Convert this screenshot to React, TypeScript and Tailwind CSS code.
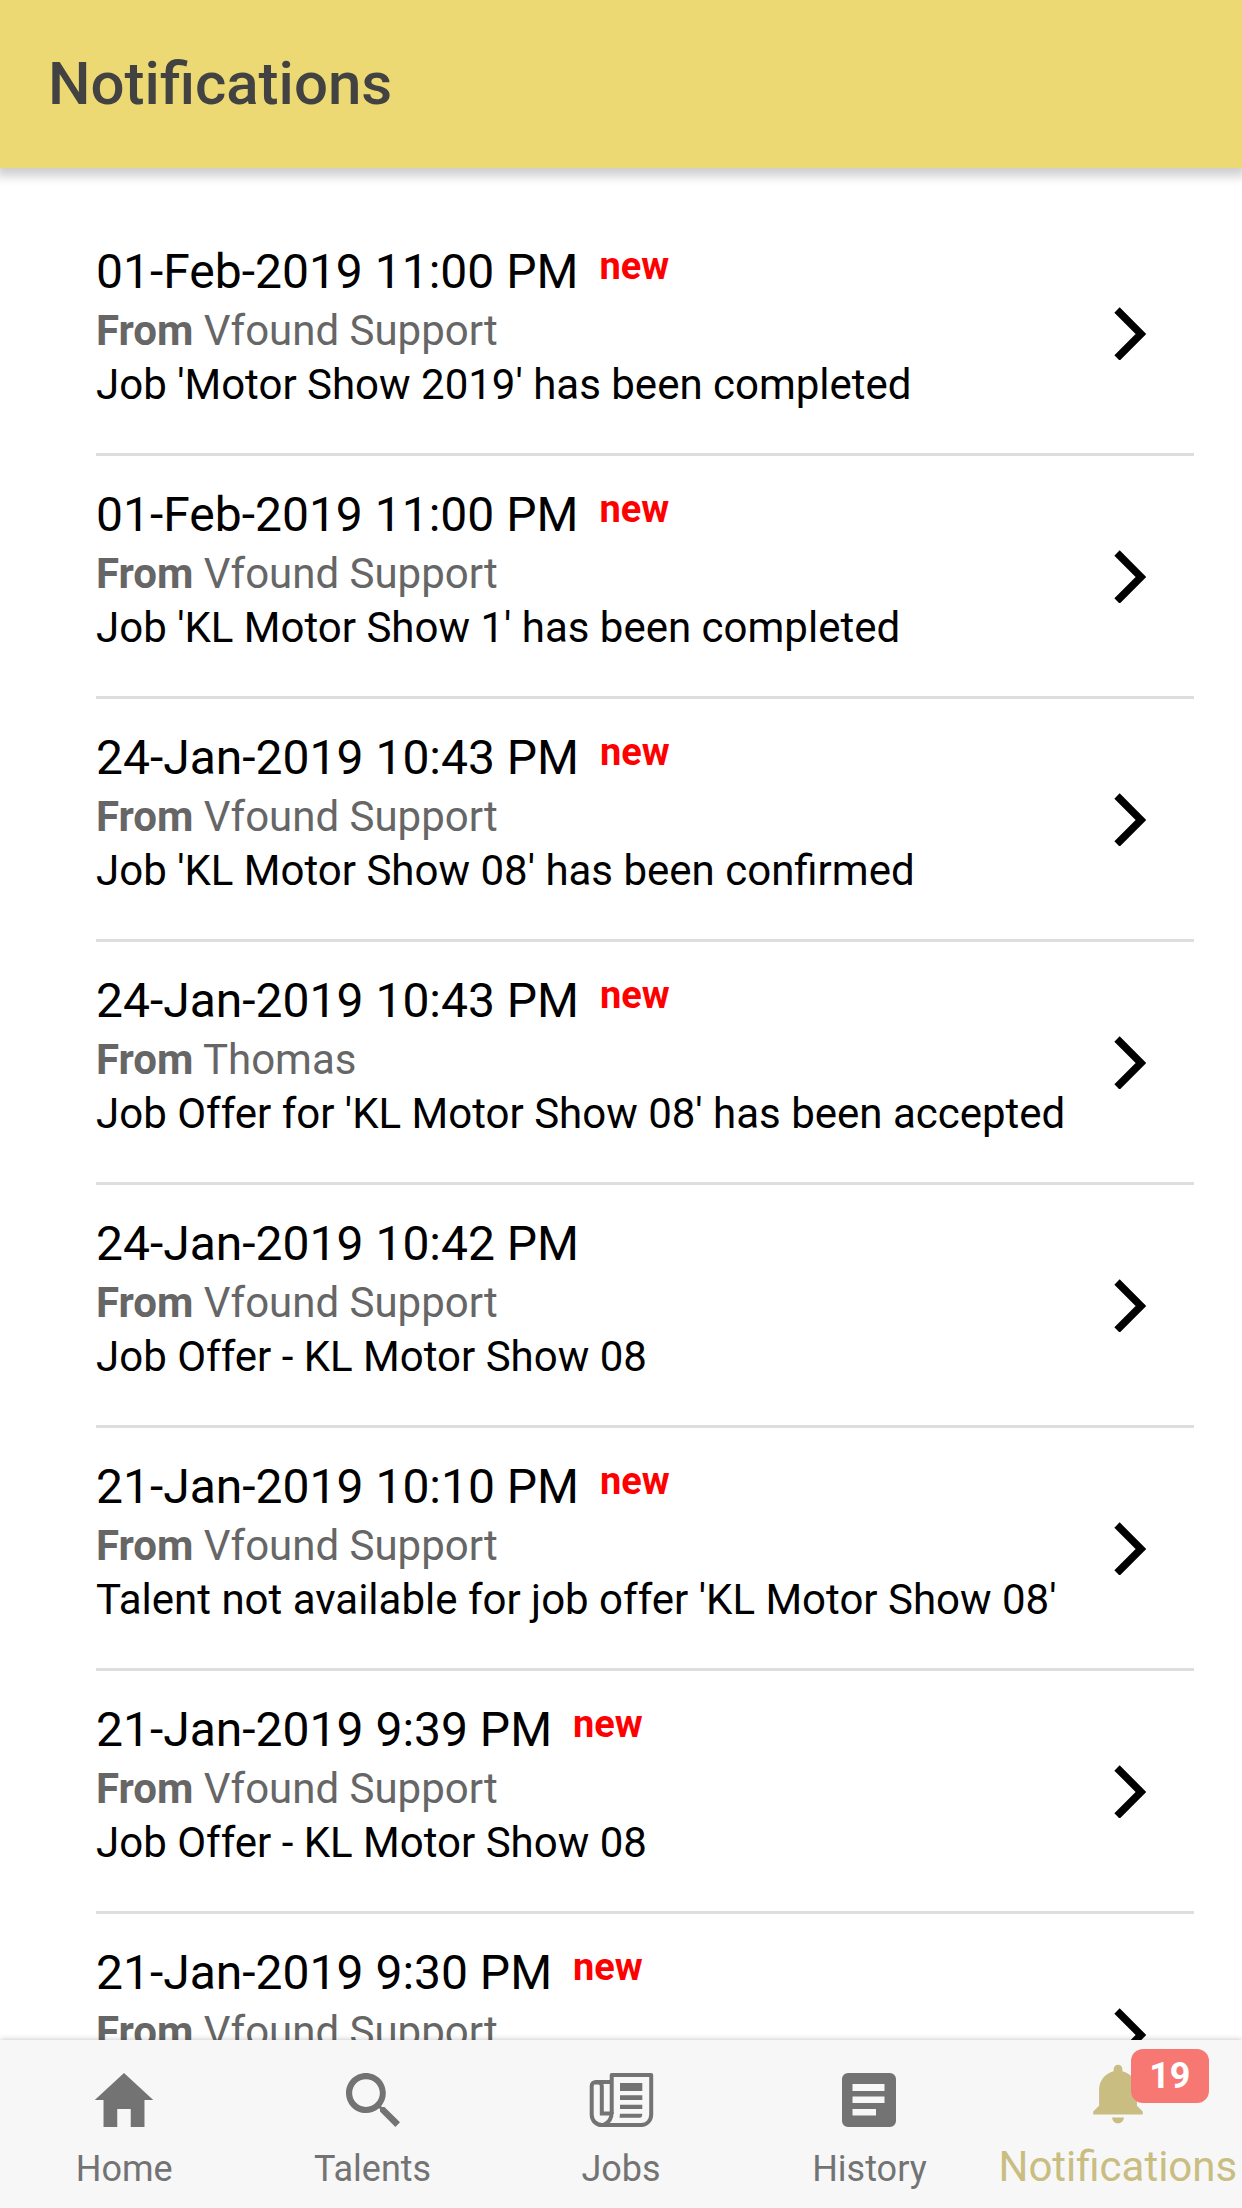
import type { ReactNode } from "react";
import { IoMdHome, IoMdNotifications, IoMdSearch } from "react-icons/io";

type Notification = {
  date: string;
  from: string;
  message: string;
  isNew: boolean;
};

const notifications: Notification[] = [
  { date: "01-Feb-2019 11:00 PM", from: "Vfound Support", message: "Job 'Motor Show 2019' has been completed", isNew: true },
  { date: "01-Feb-2019 11:00 PM", from: "Vfound Support", message: "Job 'KL Motor Show 1' has been completed", isNew: true },
  { date: "24-Jan-2019 10:43 PM", from: "Vfound Support", message: "Job 'KL Motor Show 08' has been confirmed", isNew: true },
  { date: "24-Jan-2019 10:43 PM", from: "Thomas", message: "Job Offer for 'KL Motor Show 08' has been accepted", isNew: true },
  { date: "24-Jan-2019 10:42 PM", from: "Vfound Support", message: "Job Offer - KL Motor Show 08", isNew: false },
  { date: "21-Jan-2019 10:10 PM", from: "Vfound Support", message: "Talent not available for job offer 'KL Motor Show 08'", isNew: true },
  { date: "21-Jan-2019 9:39 PM", from: "Vfound Support", message: "Job Offer - KL Motor Show 08", isNew: true },
  { date: "21-Jan-2019 9:30 PM", from: "Vfound Support", message: "Job Offer - KL Motor Show 08", isNew: true },
];

function PaperIcon() {
  return (
    <svg viewBox="0 0 72 72" className="size-[72px]" aria-hidden="true">
      <g fill="none" stroke="currentColor" strokeWidth="4">
        <path d="M26.7 50V11h39.5v39.5c0 6-4.2 10.5-10 10.5H17c-6 0-10.3-4.5-10.3-10.5V22c0-2.5 1.8-4 4.3-4h15.7" strokeLinejoin="round" />
        <path d="M10 18.5h3.5c2 0 3.3 1.5 3.3 3.5v27.5h9.9" />
        <path d="M26.7 48c0 6-2.7 10.5-7.7 12.5" />
      </g>
      <path d="M35 19h22.3v8H35zM35 31.3h22.3V36H35zM35 40.7h22.3V45H35zM35 49.7h22.3c0 2.5-.8 4-2.5 4H34.5z" fill="currentColor" />
    </svg>
  );
}

function ListBoxIcon() {
  return (
    <svg viewBox="0 0 72 72" className="size-[72px]" aria-hidden="true">
      <path
        fill="currentColor"
        fillRule="evenodd"
        d="M15 9h42a6 6 0 0 1 6 6v42a6 6 0 0 1-6 6H15a6 6 0 0 1-6-6V15a6 6 0 0 1 6-6zM19.5 20v7h32v-7zM19.5 32.5v6.5h32v-6.5zM19.5 45v6.5H43V45z"
      />
    </svg>
  );
}

function NotificationRow({ date, from, message, isNew }: Notification) {
  return (
    <li className="border-b-3 border-[#dedede]">
      <button type="button" className="flex w-full items-center justify-between pr-12 text-left">
        <span className="block pt-[29px] pb-[43px]">
          <span className="flex items-start gap-[21px] text-[48px] leading-[60px] text-black">
            {date}
            {isNew && <strong className="text-[38px] leading-[48px] font-bold text-[#ff0000]">new</strong>}
          </span>
          <span className="block text-[42px] leading-[58px] text-[#666666]">
            <strong className="font-bold">From</strong> {from}
          </span>
          <span className="block text-[42px] leading-[50px] text-black">{message}</span>
        </span>
        <svg viewBox="0 0 32 54" className="h-[54px] w-8 shrink-0" aria-hidden="true">
          <path d="M3 4 27 28 3 52" fill="none" stroke="currentColor" strokeWidth="7.5" />
        </svg>
      </button>
    </li>
  );
}

function Tab({ icon, label }: { icon: ReactNode; label: string }) {
  return (
    <a href="#" className="flex min-w-0 flex-1 flex-col items-center pt-6 text-[#737373]">
      {icon}
      <span className="mt-[11px] text-[36px] leading-[44px]">{label}</span>
    </a>
  );
}

export default function App() {
  return (
    <div className="flex h-screen flex-col bg-white font-[Roboto,sans-serif] text-black">
      <header className="z-10 flex h-[168px] shrink-0 items-center bg-[#ecd974] px-12 shadow-[0_4px_10px_4px_rgba(0,0,0,0.2)]">
        <h1 className="text-[60px] leading-[72px] font-medium text-[#424242]">Notifications</h1>
      </header>

      <main className="min-h-0 flex-1 overflow-y-auto pt-[45px] [scrollbar-width:none]">
        <ul className="ml-24 mr-12">
          {notifications.map((item, i) => (
            <NotificationRow key={i} {...item} />
          ))}
        </ul>
      </main>

      <nav className="z-10 flex h-[168px] shrink-0 bg-[#f7f7f7] shadow-[0_0_6px_rgba(0,0,0,0.25)]">
        <Tab icon={<IoMdHome className="size-[72px]" />} label="Home" />
        <Tab icon={<IoMdSearch className="size-[72px]" />} label="Talents" />
        <Tab icon={<PaperIcon />} label="Jobs" />
        <Tab icon={<ListBoxIcon />} label="History" />
        <a href="#" aria-current="page" className="flex min-w-0 flex-1 flex-col items-center pt-[18px] text-[#c9bd82]">
          <span className="relative">
            <IoMdNotifications className="size-[72px]" />
            <span className="absolute -top-[9px] left-[49px] flex h-[54px] w-[78px] items-center justify-center rounded-xl bg-[#f77873] text-[36px] leading-[54px] font-bold text-white">
              19
            </span>
          </span>
          <span className="mt-[11px] text-[42px] leading-[52px]">Notifications</span>
        </a>
      </nav>
    </div>
  );
}
